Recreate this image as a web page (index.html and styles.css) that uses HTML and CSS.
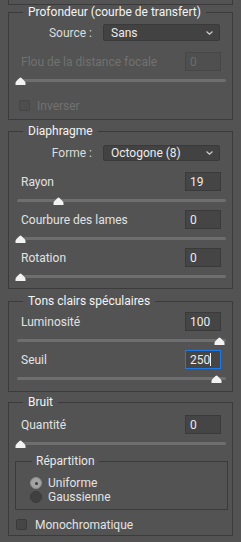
FILE: index.html
```html
<!DOCTYPE html>
<html lang="fr">
<head>
    <meta charset="UTF-8">
    <meta name="viewport" content="width=device-width, initial-scale=1.0">
    <title>Flou de l'objectif</title>
    <link rel="stylesheet" href="styles.css">
</head>
<body>
    <div class="panel">
        <div class="group-end"></div>

        <!-- Profondeur -->
        <fieldset class="group group-depth">
            <legend>Profondeur (courbe de transfert)</legend>
            <div class="pick-row">
                <span class="pick-label">Source :</span>
                <div class="select select-tall">
                    <span>Sans</span>
                    <svg class="chevron" width="7" height="4" viewBox="0 0 7 4"><path d="M0.5 0.5 L3.5 3.2 L6.5 0.5" fill="none" stroke="#d0d0d0" stroke-width="1.1"/></svg>
                </div>
            </div>
            <div class="field field-first is-disabled">
                <span>Flou de la distance focale</span>
                <span class="num">0</span>
            </div>
            <div class="slider is-disabled">
                <div class="track"></div>
                <svg class="thumb" style="left:-2px" width="11" height="8" viewBox="0 0 11 8"><path d="M0.5 8 L0.5 6 Q0.5 5 1.5 4 L4.5 1 Q5.5 0 6.5 1 L9.5 4 Q10.5 5 10.5 6 L10.5 8 Z"/></svg>
            </div>
            <label class="check check-inverse is-disabled"><span class="box"></span>Inverser</label>
        </fieldset>

        <!-- Diaphragme -->
        <fieldset class="group group-iris">
            <legend>Diaphragme</legend>
            <div class="pick-row">
                <span class="pick-label">Forme :</span>
                <div class="select">
                    <span>Octogone (8)</span>
                    <svg class="chevron" width="7" height="4" viewBox="0 0 7 4"><path d="M0.5 0.5 L3.5 3.2 L6.5 0.5" fill="none" stroke="#d0d0d0" stroke-width="1.1"/></svg>
                </div>
            </div>
            <div class="field field-first">
                <span>Rayon</span>
                <span class="num">19</span>
            </div>
            <div class="slider">
                <div class="track"></div>
                <svg class="thumb" style="left:36px" width="11" height="8" viewBox="0 0 11 8"><path d="M0.5 8 L0.5 6 Q0.5 5 1.5 4 L4.5 1 Q5.5 0 6.5 1 L9.5 4 Q10.5 5 10.5 6 L10.5 8 Z"/></svg>
            </div>
            <div class="field">
                <span>Courbure des lames</span>
                <span class="num">0</span>
            </div>
            <div class="slider">
                <div class="track"></div>
                <svg class="thumb" style="left:-2px" width="11" height="8" viewBox="0 0 11 8"><path d="M0.5 8 L0.5 6 Q0.5 5 1.5 4 L4.5 1 Q5.5 0 6.5 1 L9.5 4 Q10.5 5 10.5 6 L10.5 8 Z"/></svg>
            </div>
            <div class="field">
                <span>Rotation</span>
                <span class="num">0</span>
            </div>
            <div class="slider">
                <div class="track"></div>
                <svg class="thumb" style="left:-2px" width="11" height="8" viewBox="0 0 11 8"><path d="M0.5 8 L0.5 6 Q0.5 5 1.5 4 L4.5 1 Q5.5 0 6.5 1 L9.5 4 Q10.5 5 10.5 6 L10.5 8 Z"/></svg>
            </div>
        </fieldset>

        <!-- Tons clairs -->
        <fieldset class="group group-lights">
            <legend>Tons clairs spéculaires</legend>
            <div class="field">
                <span>Luminosité</span>
                <span class="num">100</span>
            </div>
            <div class="slider">
                <div class="track"></div>
                <svg class="thumb" style="left:197px" width="11" height="8" viewBox="0 0 11 8"><path d="M0.5 8 L0.5 6 Q0.5 5 1.5 4 L4.5 1 Q5.5 0 6.5 1 L9.5 4 Q10.5 5 10.5 6 L10.5 8 Z"/></svg>
            </div>
            <div class="field">
                <span>Seuil</span>
                <span class="num is-focused">250<i class="caret"></i></span>
            </div>
            <div class="slider">
                <div class="track"></div>
                <svg class="thumb" style="left:194px" width="11" height="8" viewBox="0 0 11 8"><path d="M0.5 8 L0.5 6 Q0.5 5 1.5 4 L4.5 1 Q5.5 0 6.5 1 L9.5 4 Q10.5 5 10.5 6 L10.5 8 Z"/></svg>
            </div>
        </fieldset>

        <!-- Bruit -->
        <fieldset class="group group-noise">
            <legend>Bruit</legend>
            <div class="field">
                <span>Quantité</span>
                <span class="num">0</span>
            </div>
            <div class="slider">
                <div class="track"></div>
                <svg class="thumb" style="left:-2px" width="11" height="8" viewBox="0 0 11 8"><path d="M0.5 8 L0.5 6 Q0.5 5 1.5 4 L4.5 1 Q5.5 0 6.5 1 L9.5 4 Q10.5 5 10.5 6 L10.5 8 Z"/></svg>
            </div>
            <fieldset class="subgroup">
                <legend>Répartition</legend>
                <label class="radio"><span class="dot is-on"></span>Uniforme</label>
                <label class="radio"><span class="dot"></span>Gaussienne</label>
            </fieldset>
            <label class="check check-mono"><span class="box"></span>Monochromatique</label>
        </fieldset>
    </div>
</body>
</html>
```

FILE: styles.css
```css
body {
    margin: 0;
    background-color: #535353;
    font-family: Roboto, "Liberation Sans", sans-serif;
    font-size: 12px;
    color: #e2e2e2;
}
.panel {
    padding: 0 8px;
}
.group-end {
    height: 4px;
    border: 1px solid #3b3b3b;
    border-top: none;
}
.group {
    margin: 0;
    border: 1px solid #3b3b3b;
    padding: 4px 11px 8px 12px;
}
.group legend {
    margin-left: 2px;
    padding: 0 5px;
    line-height: 15px;
    font-size: 12px;
    white-space: nowrap;
    color: #f4f4f4;
}
.group-iris {
    margin-top: 4px;
    padding-top: 6px;
    padding-bottom: 2px;
}
.group-lights {
    margin-top: 5px;
    padding-top: 3px;
    padding-bottom: 3px;
}
.group-noise {
    margin-top: 3px;
    padding-top: 5px;
    padding-bottom: 5px;
}

/* listes deroulantes */
.pick-row {
    display: flex;
    justify-content: flex-end;
    align-items: center;
    gap: 11px;
}
.pick-label {
    color: #dcdcdc;
}
.select {
    width: 117px;
    height: 16px;
    margin-right: 1px;
    box-sizing: border-box;
    display: flex;
    align-items: center;
    justify-content: space-between;
    padding: 0 6px 0 7px;
    background-color: #424242;
    border: 1px solid #3a3a3a;
    border-radius: 2px;
    color: #ececec;
}
.select-tall {
    height: 17px;
}

/* champs numeriques */
.field {
    display: flex;
    justify-content: space-between;
    align-items: center;
    height: 19px;
}
.field-first {
    margin-top: 11px;
}
.num {
    width: 36px;
    height: 19px;
    box-sizing: border-box;
    padding-left: 4px;
    display: flex;
    align-items: center;
    background-color: #454545;
    border: 1px solid #3a3a3a;
    color: #ececec;
}
.num.is-focused {
    border-color: #1f7ae8;
}
.caret {
    display: inline-block;
    width: 1px;
    height: 13px;
    background: #f0f0f0;
}
.field.is-disabled {
    color: #717171;
}
.field.is-disabled .num {
    background-color: #4f4f4f;
    border-color: #474747;
    color: #6c6c6c;
}

/* curseurs */
.slider {
    position: relative;
    height: 19px;
    margin: 0 -5px 0 -4px;
    display: flex;
    align-items: center;
}
.track {
    flex: 1;
    height: 3px;
    border-radius: 2px;
    background-color: #6e6e6e;
}
.thumb {
    position: absolute;
    top: 6px;
    fill: #f2f2f2;
}

/* cases a cocher */
.check {
    display: flex;
    align-items: center;
    gap: 7px;
    height: 11px;
    color: #e2e2e2;
}
.check .box {
    width: 11px;
    height: 11px;
    box-sizing: border-box;
    border: 1px solid #3a3a3a;
    border-radius: 2px;
    background-color: #464646;
}
.check-inverse {
    margin-top: 10px;
    margin-left: -2px;
}
.check.is-disabled {
    color: #717171;
}
.check.is-disabled .box {
    background-color: #4e4e4e;
    border-color: #464646;
}
.check-mono {
    margin-top: 9px;
    margin-left: -5px;
    gap: 8px;
}

/* repartition */
.subgroup {
    margin: 1px -7px 0 -6px;
    border: 1px solid #3b3b3b;
    padding: 7px 10px 5px 14px;
}
.subgroup legend {
    padding: 0 4px;
    line-height: 15px;
    color: #e8e8e8;
}
.radio {
    display: flex;
    align-items: center;
    gap: 6px;
    height: 14px;
}
.radio .dot {
    width: 12px;
    height: 12px;
    box-sizing: border-box;
    border-radius: 50%;
    border: 1px solid #3a3a3a;
    background-color: #404040;
    display: flex;
    align-items: center;
    justify-content: center;
}
.radio .dot.is-on {
    background-color: #a3a3a3;
    border-color: #8f8f8f;
}
.radio .dot.is-on::after {
    content: "";
    width: 3px;
    height: 3px;
    border-radius: 50%;
    background-color: #3b3b3b;
}
```
